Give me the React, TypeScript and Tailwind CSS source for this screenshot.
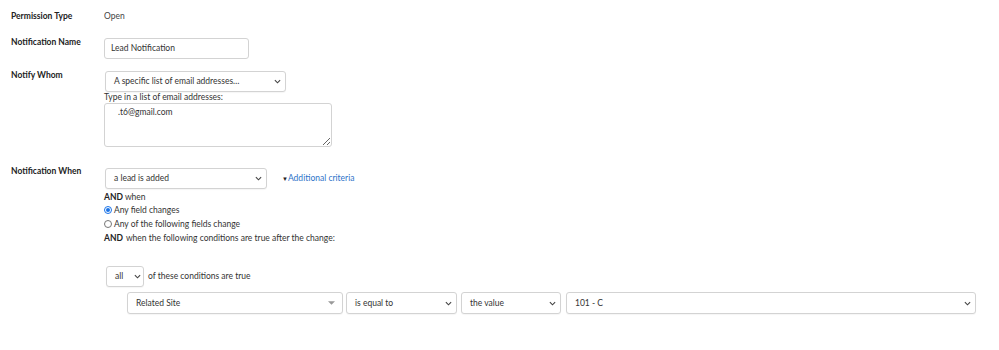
import type { ReactNode } from "react";

const font = { fontFamily: "Lato, 'Open Sans', sans-serif" };

function Chevron() {
  return (
    <svg className="w-[7px] h-[5px] text-[#444]" viewBox="0 0 8 5" fill="none" stroke="currentColor" strokeWidth="1.3">
      <polyline points="1,1 4,4 7,1" />
    </svg>
  );
}

function Caret() {
  return (
    <svg className="w-[7px] h-[4px] text-[#999]" viewBox="0 0 8 4" fill="currentColor">
      <polygon points="0,0 8,0 4,4" />
    </svg>
  );
}

function Select({
  value,
  className,
  caret,
}: {
  value: string;
  className: string;
  caret?: boolean;
}) {
  return (
    <div
      className={`flex items-center justify-between border border-[#d3d3d3] rounded-[3px] bg-white pl-[8px] text-[8.5px] text-[#333] shadow-[0_1px_1px_rgba(0,0,0,0.04)] ${className}`}
    >
      <span>{value}</span>
      {caret ? <Caret /> : <Chevron />}
    </div>
  );
}

function Row({ label, children, className }: { label: string; children: ReactNode; className: string }) {
  return (
    <div className={`flex ${className}`}>
      <div className="w-[93px] shrink-0 text-[8.5px] font-bold text-[#222] leading-[12px]">{label}</div>
      <div className="flex-1">{children}</div>
    </div>
  );
}

function Radio({ checked, label }: { checked?: boolean; label: string }) {
  return (
    <div className="flex items-center h-[14px] gap-[2px]">
      <div
        className={`w-[8px] h-[8px] rounded-full border flex items-center justify-center ${
          checked ? "border-[#1a73e8]" : "border-[#767676]"
        }`}
      >
        {checked && <div className="w-[4px] h-[4px] rounded-full bg-[#1a73e8]" />}
      </div>
      <span>{label}</span>
    </div>
  );
}

export default function App() {
  return (
    <div style={font} className="w-[999px] h-[350px] bg-white px-[11px] text-[#333] overflow-hidden">
      <Row label="Permission Type" className="pt-[10px]">
        <div className="text-[8.5px] leading-[12px] text-[#444]">Open</div>
      </Row>

      <Row label="Notification Name" className="mt-[14px]">
        <div className="mt-[2px] w-[145px] h-[21px] border border-[#d3d3d3] rounded-[3px] flex items-center pl-[6px] text-[8.5px] text-[#333]">
          Lead Notification
        </div>
      </Row>

      <Row label="Notify Whom" className="mt-[10px]">
        <Select value="A specific list of email addresses…" className="mt-[2px] ml-[1px] w-[181px] h-[21px] pr-[4px]" />
        <div className="text-[8.5px] leading-[11px] text-[#333]">Type in a list of email addresses:</div>
        <textarea
          readOnly
          defaultValue=".t6@gmail.com"
          className="block w-[228px] h-[44px] border border-[#d3d3d3] rounded-[3px] pl-[13px] pt-[2px] text-[8.5px] text-[#333] outline-none"
        />
      </Row>

      <Row label="Notification When" className="mt-[18px]">
        <div className="flex items-center mt-[3px]">
          <Select value="a lead is added" className="ml-[1px] w-[162px] h-[21px] pr-[4px]" />
          <div className="ml-[15px] flex items-center text-[8.5px] text-[#2e73c9]">
            <span className="text-[6px] text-[#222]">▼</span>
            Additional criteria
          </div>
        </div>
        <div className="mt-[2px] text-[8.5px] leading-[12px] text-[#333]">
          <span className="font-bold text-[#222]">AND</span> when
        </div>
        <div className="text-[8.5px] text-[#333]">
          <Radio checked label="Any field changes" />
          <Radio label="Any of the following fields change" />
          <div className="h-[14px] flex items-center">
            <span className="font-bold text-[#222] mr-[3px]">AND</span> when the following conditions are true after the change:
          </div>
        </div>
        <div className="mt-[21px] flex items-center">
          <Select value="all" className="ml-[2px] w-[38px] h-[21px] pr-[2px]" />
          <span className="ml-[4px] text-[8.5px] text-[#333]">of these conditions are true</span>
        </div>
        <div className="mt-[5px] ml-[23px] flex gap-[3px]">
          <Select value="Related Site" caret className="w-[216px] h-[22px] pr-[7px]" />
          <Select value="is equal to" className="w-[111px] h-[22px] pr-[4px]" />
          <Select value="the value" className="ml-[1px] w-[100px] h-[22px] pr-[4px]" />
          <Select value="101 - C" className="ml-[2px] w-[410px] h-[22px] pr-[4px]" />
        </div>
      </Row>
    </div>
  );
}
